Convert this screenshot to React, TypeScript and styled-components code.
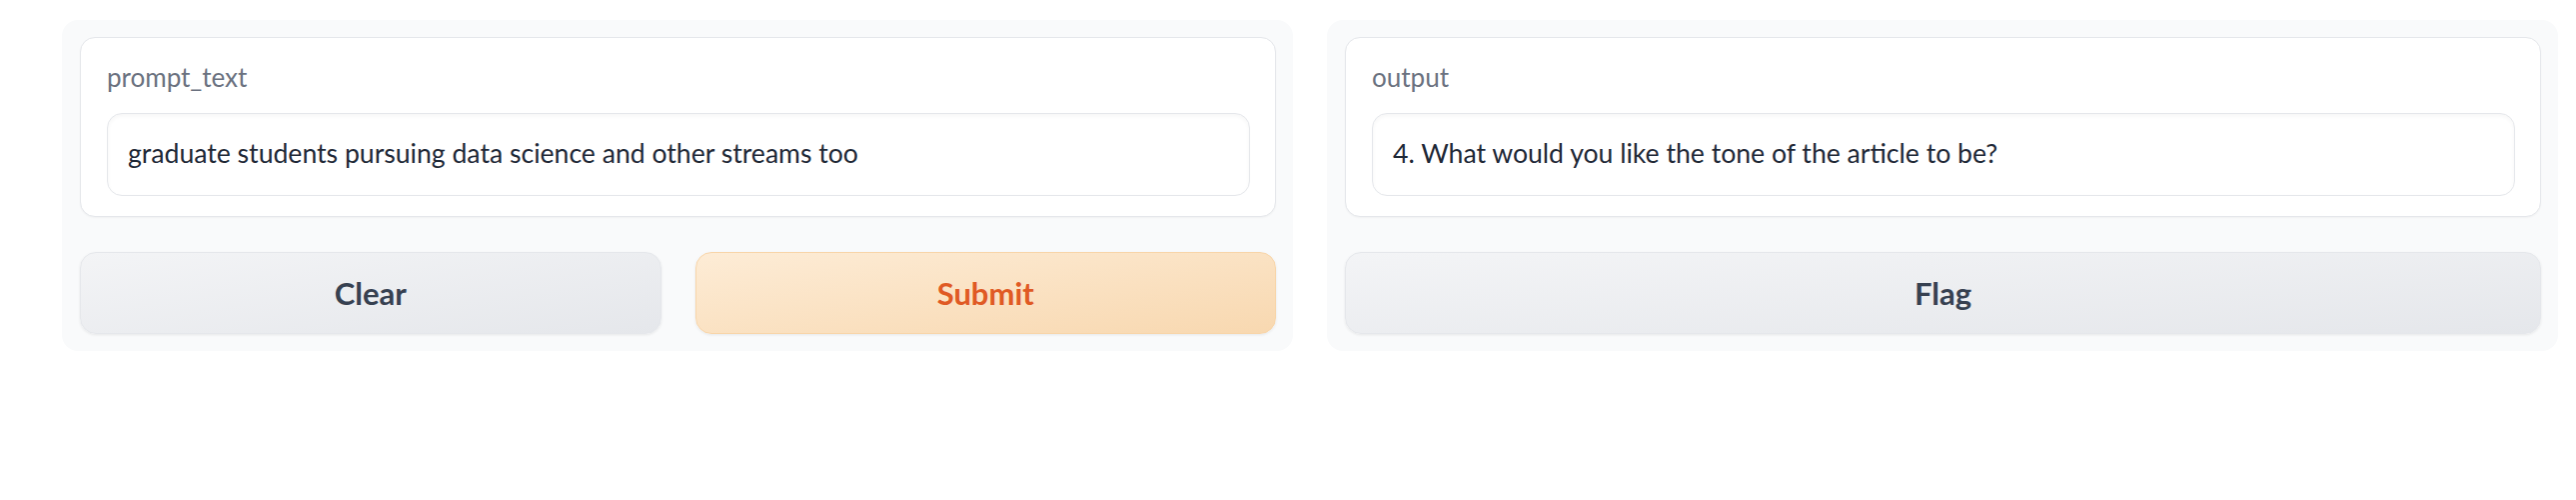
import styled, { createGlobalStyle } from "styled-components";

const GlobalStyle = createGlobalStyle`
  body {
    margin: 0;
    background: #ffffff;
    font-family: "Lato", "Noto Sans", sans-serif;
  }
`;

function App() {
  return (
    <>
      <GlobalStyle />
      <Row>
        <Panel>
          <Block>
            <BlockLabel>prompt_text</BlockLabel>
            <TextInput>graduate students pursuing data science and other streams too</TextInput>
          </Block>
          <ButtonRow>
            <Button>Clear</Button>
            <Button primary>Submit</Button>
          </ButtonRow>
        </Panel>
        <Panel>
          <Block>
            <BlockLabel>output</BlockLabel>
            <TextInput>4. What would you like the tone of the article to be?</TextInput>
          </Block>
          <ButtonRow>
            <Button>Flag</Button>
          </ButtonRow>
        </Panel>
      </Row>
    </>
  );
}

const Row = styled.div`
  display: grid;
  grid-template-columns: 1fr 1fr;
  gap: 34px;
  padding: 20px 18px 0 62px;
`;

const Panel = styled.div`
  display: flex;
  flex-direction: column;
  gap: 35px;
  padding: 17px 17px 17px 18px;
  background: #f9fafb;
  border-radius: 16px;
`;

const Block = styled.div`
  display: flex;
  flex-direction: column;
  gap: 17px;
  padding: 24px 25px 20px 26px;
  background: #ffffff;
  border: 1px solid #e5e7eb;
  border-radius: 15px;
  box-shadow: 0 1px 2px rgba(0, 0, 0, 0.04);
`;

const BlockLabel = styled.span`
  height: 34px;
  line-height: 30px;
  font-size: 26px;
  color: #6b7280;
`;

const TextInput = styled.div`
  box-sizing: border-box;
  height: 83px;
  display: flex;
  align-items: center;
  padding: 0 20px 3px;
  background: #ffffff;
  border: 1px solid #e5e7eb;
  border-radius: 15px;
  box-shadow: inset 0 2px 4px rgba(0, 0, 0, 0.04);
  font-size: 26.6px;
  color: #1f2937;
  white-space: nowrap;
  overflow: hidden;
`;

const ButtonRow = styled.div`
  display: flex;
  gap: 34px;
`;

const Button = styled.button<{ primary?: boolean }>`
  flex: 1;
  height: 82px;
  display: flex;
  justify-content: center;
  align-items: center;
  font-family: "Lato", "Noto Sans", sans-serif;
  font-size: 31px;
  font-weight: 700;
  border-radius: 16px;
  border: 1px solid ${({ primary }) => (primary ? "#f8d5a9" : "#e5e7eb")};
  background: ${({ primary }) =>
    primary
      ? "linear-gradient(to bottom right, #fdecd6, #f8d8b0)"
      : "linear-gradient(to bottom right, #f3f4f6, #e5e7eb)"};
  color: ${({ primary }) => (primary ? "#e05a24" : "#374151")};
  box-shadow: 0 1px 3px rgba(0, 0, 0, 0.08);
  cursor: pointer;
`;

export default App;
